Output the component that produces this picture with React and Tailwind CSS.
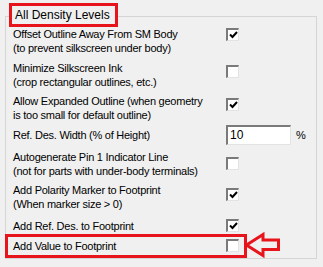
const rows = [
  { lines: ["Offset Outline Away From SM Body", "(to prevent silkscreen under body)"], checked: true, mt: "mt-[10px]", cb: "mt-[1px]" },
  { lines: ["Minimize Silkscreen Ink", "(crop rectangular outlines, etc.)"], checked: false, mt: "mt-[6px]", cb: "mt-[4px]" },
  { lines: ["Allow Expanded Outline (when geometry", "is too small for default outline)"], checked: true, mt: "mt-[5px]", cb: "mt-[4px]" },
  { input: true, lines: ["Ref. Des. Width (% of Height)"], mt: "mt-[3px]" },
  { lines: ["Autogenerate Pin 1 Indicator Line", "(not for parts with under-body terminals)"], checked: false, mt: "mt-[5px]", cb: "mt-[7px]" },
  { lines: ["Add Polarity Marker to Footprint", "(When marker size > 0)"], checked: true, mt: "mt-[5px]", cb: "mt-[5px]" },
  { lines: ["Add Ref. Des. to Footprint"], checked: true, mt: "mt-[8px]", cb: "mt-0" },
  { lines: ["Add Value to Footprint"], checked: false, mt: "mt-[6px]", cb: "mt-0" },
]

function CheckBox({ checked }) {
  return (
    <div className="w-[13px] h-[13px] bg-white border-t-2 border-l-2 border-r border-b border-t-[#7a7a7a] border-l-[#7a7a7a] border-r-[#e3e3e3] border-b-[#e3e3e3] flex items-center justify-center">
      {checked && (
        <svg width="9" height="8" viewBox="0 0 9 8">
          <path d="M1 3.5 L3.5 6 L8 1" fill="none" stroke="#000" strokeWidth="2" />
        </svg>
      )}
    </div>
  )
}

export default function App() {
  return (
    <div
      className="relative w-[323px] h-[267px] bg-[#f0f0f0] pt-[16px] pl-[5px] text-black overflow-hidden"
      style={{ fontFamily: '"Liberation Sans", Arial, sans-serif' }}
    >
      {/* group box */}
      <div className="relative w-[312px] h-[243px] border border-[#d5d5d5] pl-[7px]">
        <div className="absolute left-[3px] top-[-14px] w-[109px] h-[24px] border-[3px] border-[#e8141c] bg-[#f0f0f0] flex items-center pl-[3px] text-[12px]">
          All Density Levels
        </div>

        {rows.map((row, i) => (
          <div key={i} className={`flex ${row.mt} ${row.input ? "items-center h-[20px]" : ""}`}>
            <div className="w-[213px] text-[11px] leading-[14px] tracking-[-0.25px]">
              {row.lines.map((l, j) => (
                <div key={j}>{l}</div>
              ))}
            </div>
            {row.input ? (
              <div className="flex items-center">
                <div className="w-[65px] h-[20px] bg-white border-t-2 border-l-2 border-r border-b border-t-[#7a7a7a] border-l-[#7a7a7a] border-r-[#e3e3e3] border-b-[#e3e3e3] pl-[2px] text-[12px] leading-[16px]">
                  10
                </div>
                <span className="ml-[5px] text-[11px]">%</span>
              </div>
            ) : (
              <div className={row.cb}>
                <CheckBox checked={row.checked} />
              </div>
            )}
          </div>
        ))}

        {/* annotation: highlighted row */}
        <div className="absolute left-[-1px] top-[217px] w-[242px] h-[24px] border-[3px] border-[#e8141c]" />
      </div>

      {/* annotation arrow */}
      <svg className="absolute left-[244px] top-[232px]" width="38" height="26" viewBox="0 0 38 26">
        <path d="M2.5 13 L19 2.5 L19 8 L34.5 8 L34.5 17.5 L19 17.5 L19 23.5 Z" fill="none" stroke="#e8141c" strokeWidth="3" strokeLinejoin="miter" />
      </svg>
    </div>
  )
}
